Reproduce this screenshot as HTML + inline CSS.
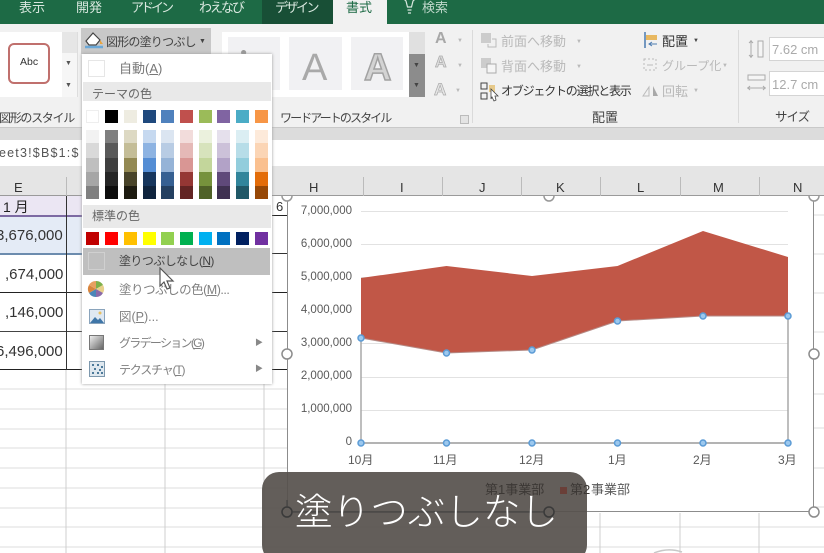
<!DOCTYPE html>
<html lang="ja"><head><meta charset="utf-8"><style>
html,body{margin:0;padding:0;width:824px;height:553px;overflow:hidden}
body{position:relative;background:#fff;font-family:"Liberation Sans","Noto Sans CJK JP",sans-serif;color:#444}
#w{position:absolute;left:0;top:0;width:824px;height:553px;overflow:hidden}
.a,.t,.s{position:absolute}
.t{white-space:nowrap;line-height:1;font-size:12px}
.g{color:#b9b9b9}
.col{width:13px;top:130px;height:69px;position:absolute}
.s{width:13px;height:13px}
u{text-decoration:underline}
.m{font-size:12px;letter-spacing:-.6px;color:#808080}
.h{font-size:13px;color:#333}
.y{font-size:11.500px;color:#595959;width:56px;text-align:right;left:296px}
.x{font-size:12px;color:#595959;top:454px}
.c{font-size:15px;color:#333}
.tab{font-size:13px;top:1px;color:#d9e8df}
</style></head><body><div id="w">

<!-- top tab bar -->
<div class="a" style="left:0;top:0;width:824px;height:24px;background:#1d6a45"></div>
<div class="a" style="left:262px;top:0;width:71px;height:24px;background:#184f36"></div>
<div class="a" style="left:333px;top:0;width:54px;height:25px;background:#f1f1f1"></div>
<div class="t tab" style="left:19px">表示</div>
<div class="t tab" style="left:76px">開発</div>
<div class="t tab" style="left:131px;letter-spacing:-3px">アドイン</div>
<div class="t tab" style="left:199px;letter-spacing:-2px">わえなび</div>
<div class="t tab" style="left:275px;letter-spacing:-2.500px">デザイン</div>
<div class="t tab" style="left:346px;color:#1d6a45">書式</div>
<svg class="a" style="left:400px;top:0" width="20" height="18"><path d="M6 1a6 6 0 1 1 7 0l-1.500 6h-4zM7.500 10h4M8 13h3" fill="none" stroke="#d9e8df" stroke-width="1.200"/></svg>
<div class="t tab" style="left:422px;color:#c0d8cb">検索</div>

<!-- ribbon -->
<div class="a" style="left:0;top:24px;width:824px;height:103px;background:#f1f1f1"></div>
<div class="a" style="left:0;top:127px;width:824px;height:13px;background:#dcdcdc;border-top:1px solid #c9c9c9;box-sizing:border-box"></div>
<div class="a" style="left:0;top:32px;width:62px;height:65px;background:#fff"></div>
<div class="a" style="left:8px;top:43px;width:42px;height:41px;box-sizing:border-box;border:2px solid #c0706d;border-radius:6px;background:#fff"></div>
<div class="t" style="left:20px;top:57px;font-size:10.500px;color:#333">Abc</div>
<div class="a" style="left:62px;top:32px;width:15px;height:65px;background:#f6f6f6;border-right:1px solid #ddd"></div>
<div class="a" style="left:62px;top:32px;width:15px;height:21px;background:#e6e6e6"></div>
<div class="t" style="left:65px;top:60px;font-size:7px;color:#555">▼</div>
<div class="t" style="left:65px;top:82px;font-size:7px;color:#555">▼</div>
<div class="a" style="left:81px;top:28px;width:130px;height:26px;background:#c8c8c8"></div>
<svg class="a" style="left:84px;top:30px" width="22" height="20"><path d="M2 11l7-8 7 7-4 5H5z" fill="#fff" stroke="#444" stroke-width="1.200"/><path d="M1 17h18" stroke="#6aa8d8" stroke-width="2.500"/><path d="M16 10l3 4h-3z" fill="#e8a33c"/></svg>
<div class="t" style="left:106px;top:36px;letter-spacing:-.8px;color:#444">図形の塗りつぶし</div>
<div class="t" style="left:199px;top:38px;font-size:7px;color:#444">▼</div>
<div class="t" style="left:-1px;top:112px;letter-spacing:-1.300px;color:#444">図形のスタイル</div>

<!-- WordArt gallery -->
<div class="a" style="left:222px;top:32px;width:187px;height:65px;background:#fff"></div>
<div class="a" style="left:228px;top:37px;width:52px;height:53px;background:#f1f1f3"></div>
<div class="a" style="left:289px;top:37px;width:53px;height:53px;background:#f1f1f3"></div>
<div class="a" style="left:351px;top:37px;width:52px;height:53px;background:#f1f1f3"></div>
<div class="t" style="left:302px;top:49px;font-size:38px;color:#a9a9a9">A</div>
<div class="t" style="left:364px;top:49px;font-size:38px;font-weight:700;color:#d3d3d3;-webkit-text-stroke:1.500px #a2a2a2">A</div>
<div class="t" style="left:240px;top:46px;font-size:12px;color:#999">●</div>
<div class="a" style="left:409px;top:32px;width:16px;height:22px;background:#e0e0e0"></div>
<div class="a" style="left:409px;top:54px;width:16px;height:43px;background:#8c8c8c"></div>
<div class="t" style="left:413px;top:62px;font-size:7px;color:#444">▼</div>
<div class="t" style="left:413px;top:82px;font-size:7px;color:#444">▼</div>
<div class="t" style="left:435px;top:31px;font-size:16px;font-weight:700;color:#a8a8a8">A</div>
<div class="t" style="left:435px;top:55px;font-size:16px;font-weight:700;color:#ddd;-webkit-text-stroke:.7px #aaa">A</div>
<div class="t" style="left:434px;top:81px;font-size:17px;font-weight:700;color:#e6e6e6;-webkit-text-stroke:.7px #aaa">A</div>
<div class="t g" style="left:457px;top:38px;font-size:6px">▼</div>
<div class="t g" style="left:457px;top:63px;font-size:6px">▼</div>
<div class="t g" style="left:455px;top:88px;font-size:6px">▼</div>
<div class="t" style="left:280px;top:112px;letter-spacing:-1.900px;color:#444">ワードアートのスタイル</div>
<div class="a" style="left:460px;top:115px;width:7px;height:7px;border:1px solid #bbb;background:#e4e4e4"></div>
<div class="a" style="left:472px;top:30px;width:1px;height:93px;background:#dadada"></div>
<div class="a" style="left:738px;top:30px;width:1px;height:93px;background:#dadada"></div>

<!-- arrange group -->
<svg class="a" style="left:480px;top:32px" width="18" height="16"><rect x="1" y="1" width="10" height="10" fill="#ccc"/><path d="M12 7h4v8H8v-3" fill="none" stroke="#bbb"/></svg>
<svg class="a" style="left:480px;top:57px" width="18" height="17"><rect x="1" y="1" width="10" height="10" fill="#ccc"/><rect x="7" y="7" width="9" height="9" fill="#f5f5f5" stroke="#aaa"/></svg>
<svg class="a" style="left:480px;top:82px" width="20" height="20"><rect x="1" y="1" width="6" height="6" fill="none" stroke="#444"/><rect x="1" y="11" width="6" height="6" fill="none" stroke="#444"/><rect x="9" y="3" width="6" height="7" fill="#e6c98a"/><path d="M11 7l7 7-3 0 1 4-2 1-2-4-1 2z" fill="#fff" stroke="#444" stroke-width=".8"/></svg>
<div class="t g" style="left:501px;top:35px;font-size:13px">前面へ移動</div>
<div class="t g" style="left:576px;top:39px;font-size:6px">▼</div>
<div class="t g" style="left:501px;top:60px;font-size:13px">背面へ移動</div>
<div class="t g" style="left:576px;top:64px;font-size:6px">▼</div>
<div class="t" style="left:501px;top:85px;letter-spacing:-1.200px;color:#333">オブジェクトの選択と表示</div>
<svg class="a" style="left:643px;top:31px" width="16" height="18"><path d="M2 1v16" stroke="#4a7ab0" stroke-width="1.500"/><rect x="3" y="4" width="11" height="5" fill="#e8b860"/><path d="M14 13H6m3-2l-3 2 3 2" stroke="#4a7ab0" fill="none"/></svg>
<div class="t" style="left:662px;top:35px;font-size:13px;color:#333">配置</div>
<div class="t" style="left:693px;top:38px;font-size:6px;color:#444">▼</div>
<svg class="a" style="left:641px;top:56px" width="18" height="17"><rect x="3" y="3" width="12" height="11" fill="none" stroke="#bbb" stroke-dasharray="2 2"/><path d="M6 9h6" stroke="#bbb"/></svg>
<div class="t g" style="left:662px;top:60px">グループ化</div>
<div class="t g" style="left:722px;top:63px;font-size:6px">▼</div>
<svg class="a" style="left:642px;top:84px" width="18" height="14"><path d="M1 12L7 3v9z" fill="none" stroke="#bbb"/><path d="M11 2l5 10h-5z" fill="#a8a8a8"/></svg>
<div class="t g" style="left:662px;top:85px;font-size:13px">回転</div>
<div class="t g" style="left:693px;top:88px;font-size:6px">▼</div>
<div class="t" style="left:592px;top:111px;font-size:13px;color:#444">配置</div>

<!-- size group -->
<svg class="a" style="left:746px;top:39px" width="20" height="20"><path d="M5 1v18M3 4l2-2 2 2M3 16l2 2 2-2" stroke="#aaa" fill="none"/><rect x="12" y="2" width="5" height="16" fill="#f5f5f5" stroke="#aaa"/></svg>
<div class="a" style="left:769px;top:37px;width:60px;height:24px;background:#fff;border:1px solid #d4d4d4;box-sizing:border-box"></div>
<div class="t" style="left:772px;top:43px;font-size:13px;color:#aaa">7.62 cm</div>
<svg class="a" style="left:746px;top:73px" width="22" height="20"><rect x="2" y="2" width="17" height="5" fill="#f5f5f5" stroke="#aaa"/><path d="M1 15h19M4 13l-2 2 2 2M17 13l2 2-2 2" stroke="#aaa" fill="none"/></svg>
<div class="a" style="left:769px;top:71px;width:60px;height:25px;background:#fff;border:1px solid #d4d4d4;box-sizing:border-box"></div>
<div class="t" style="left:772px;top:78px;font-size:13px;color:#aaa">12.7 cm</div>
<div class="t" style="left:775px;top:111px;letter-spacing:-1px;font-size:12.500px;color:#444">サイズ</div>

<!-- formula bar -->
<div class="a" style="left:0;top:140px;width:824px;height:26px;background:#fff"></div>
<div class="t" style="left:-1px;top:147px;font-size:12.500px;letter-spacing:1.200px;color:#555">eet3!$B$1:$</div>

<!-- gridlines below table -->
<svg class="a" style="left:0;top:370px" width="824" height="183">
<g stroke="#dcdcdc" stroke-width="1"><path d="M0 19h287M0 39h287M0 59h287M0 78h287M0 98h287M0 118h287M0 138h287M0 157h287M0 177h287"/><path d="M66 0v183M165 0v183M264 0v183" stroke="#cfcfcf"/><path d="M287 157h537M287 177h537"/><path d="M600 143v40M680 143v40M759 143v40" stroke="#cfcfcf"/><path d="M814 24h10M814 58h10M814 98h10M814 137h10"/></g>
<path d="M654 183a40 40 0 0 1 28-1" fill="none" stroke="#c8c8c8" stroke-width="1.500"/>
</svg>
<svg class="a" style="left:814px;top:196px" width="10" height="180"><path d="M0 19h10M0 58h10M0 97h10M0 136h10" stroke="#dcdcdc"/></svg>

<!-- cells -->
<div class="a" style="left:0;top:196px;width:82px;height:19px;background:#ebe6f3"></div>
<div class="a" style="left:0;top:215px;width:82px;height:2px;background:#7d6aa3"></div>
<div class="a" style="left:0;top:217px;width:82px;height:37px;background:#e4ebf6"></div>
<div class="a" style="left:0;top:253px;width:82px;height:2px;background:#6c8cae"></div>
<div class="a" style="left:0;top:292px;width:82px;height:1px;background:#222"></div>
<div class="a" style="left:0;top:331px;width:82px;height:1px;background:#444"></div>
<div class="a" style="left:0;top:369px;width:82px;height:1px;background:#222"></div>
<div class="a" style="left:66px;top:196px;width:1px;height:174px;background:#333"></div>
<div class="t" style="left:3px;top:200px;font-size:14px;color:#222">1 月</div>
<div class="t c" style="left:-4px;top:228px">3,676,000</div>
<div class="t c" style="left:5px;top:267px">,674,000</div>
<div class="t c" style="left:5px;top:305px">,146,000</div>
<div class="t c" style="left:-4px;top:344px">6,496,000</div>
<div class="a" style="left:272px;top:215px;width:15px;height:1px;background:#222"></div>
<div class="a" style="left:272px;top:253px;width:15px;height:1px;background:#333"></div>
<div class="a" style="left:272px;top:292px;width:15px;height:1px;background:#222"></div>
<div class="a" style="left:272px;top:331px;width:15px;height:1px;background:#333"></div>
<div class="a" style="left:272px;top:369px;width:15px;height:1px;background:#222"></div>
<div class="t" style="left:276px;top:200px;font-size:13px;color:#333">6</div>

<!-- chart -->
<div class="a" style="left:287px;top:196px;width:527px;height:316px;background:#fff;border:1px solid #8c8c8c;box-sizing:border-box;border-top:0"></div>
<svg class="a" style="left:280px;top:186px" width="544" height="340">
<g stroke="#e2e2e2" stroke-width="1"><path d="M81 25.500h427M81 58.500h427M81 91.500h427M81 124.500h427M81 157.500h427M81 191.500h427M81 224.500h427"/></g>
<path d="M81 92L166.500 80 252 90 337.500 80 423 45 508 71V130L423 130 337.500 135 252 164 166.500 167 81 152Z" fill="#c15747"/>
<path d="M81 152V257M508 130V257" stroke="#a8a8a8" stroke-width="1.500"/>
<path d="M81 257H508" stroke="#9a9a9a" stroke-width="1.500"/>
<path d="M81 152L166.500 167 252 164 337.500 135 423 130 508 130" fill="none" stroke="#b58a85" stroke-width="1"/>
<g fill="#9cc8ee" stroke="#5b9bd5" stroke-width="1.500"><circle cx="81" cy="152" r="3"/><circle cx="166.500" cy="167" r="3"/><circle cx="252" cy="164" r="3"/><circle cx="337.500" cy="135" r="3"/><circle cx="423" cy="130" r="3"/><circle cx="508" cy="130" r="3"/><circle cx="81" cy="257" r="3"/><circle cx="166.500" cy="257" r="3"/><circle cx="252" cy="257" r="3"/><circle cx="337.500" cy="257" r="3"/><circle cx="423" cy="257" r="3"/><circle cx="508" cy="257" r="3"/></g>
<g fill="#fff" stroke="#8c8c8c" stroke-width="1.500"><circle cx="7" cy="168" r="5"/><circle cx="534" cy="168" r="5"/><circle cx="534" cy="326" r="5"/><circle cx="7" cy="326" r="5"/><circle cx="269" cy="326" r="5"/></g>
</svg>

<!-- column headers (above the chart so top handles are cut off) -->
<div class="a" style="left:0;top:166px;width:824px;height:30px;background:#e5e5e5;border-bottom:1px solid #9a9a9a;box-sizing:border-box"></div>
<svg class="a" style="left:280px;top:195px" width="544" height="10"><g fill="#fff" stroke="#999" stroke-width="1.500"><path d="M2 1a5 5 0 0 0 10 0"/><path d="M264 1a5 5 0 0 0 10 0"/><path d="M529 1a5 5 0 0 0 10 0"/></g></svg>
<div class="a" style="left:66px;top:177px;width:1px;height:19px;background:#bbb"></div>
<div class="a" style="left:363px;top:177px;width:1px;height:19px;background:#bbb"></div>
<div class="a" style="left:442px;top:177px;width:1px;height:19px;background:#bbb"></div>
<div class="a" style="left:521px;top:177px;width:1px;height:19px;background:#bbb"></div>
<div class="a" style="left:600px;top:177px;width:1px;height:19px;background:#bbb"></div>
<div class="a" style="left:680px;top:177px;width:1px;height:19px;background:#bbb"></div>
<div class="a" style="left:759px;top:177px;width:1px;height:19px;background:#bbb"></div>
<div class="t h" style="left:14px;top:181px">E</div>
<div class="t h" style="left:309px;top:181px">H</div>
<div class="t h" style="left:400px;top:181px">I</div>
<div class="t h" style="left:479px;top:181px">J</div>
<div class="t h" style="left:556px;top:181px">K</div>
<div class="t h" style="left:637px;top:181px">L</div>
<div class="t h" style="left:713px;top:181px">M</div>
<div class="t h" style="left:793px;top:181px">N</div>

<div class="t y" style="top:206px">7,000,000</div>
<div class="t y" style="top:239px">6,000,000</div>
<div class="t y" style="top:272px">5,000,000</div>
<div class="t y" style="top:305px">4,000,000</div>
<div class="t y" style="top:338px">3,000,000</div>
<div class="t y" style="top:371px">2,000,000</div>
<div class="t y" style="top:404px">1,000,000</div>
<div class="t y" style="top:437px">0</div>
<div class="t x" style="left:348px">10月</div>
<div class="t x" style="left:433px">11月</div>
<div class="t x" style="left:519px">12月</div>
<div class="t x" style="left:608px">1月</div>
<div class="t x" style="left:693px">2月</div>
<div class="t x" style="left:778px">3月</div>
<div class="t" style="left:591px;top:483px;font-size:13px;color:#595959">事業部</div>

<!-- dropdown menu -->
<div class="a" style="left:82px;top:54px;width:190px;height:330px;background:#fff;box-shadow:0 0 3px #999"></div>
<div class="a" style="left:88px;top:60px;width:17px;height:17px;border:1px solid #e6e6e6;box-sizing:border-box"></div>
<div class="t" style="left:119px;top:62px;font-size:13px;color:#777">自動(<u>A</u>)</div>
<div class="a" style="left:83px;top:82px;width:188px;height:19px;background:#e9e9e9"></div>
<div class="t" style="left:92px;top:88px;color:#666">テーマの色</div>
<div class="s" style="left:86px;top:110px;background:#fff;border:1px solid #eee;box-sizing:border-box"></div>
<div class="s" style="left:105px;top:110px;background:#000"></div>
<div class="s" style="left:124px;top:110px;background:#eeece1"></div>
<div class="s" style="left:143px;top:110px;background:#1f497d"></div>
<div class="s" style="left:161px;top:110px;background:#4f81bd"></div>
<div class="s" style="left:180px;top:110px;background:#c0504d"></div>
<div class="s" style="left:199px;top:110px;background:#9bbb59"></div>
<div class="s" style="left:217px;top:110px;background:#8064a2"></div>
<div class="s" style="left:236px;top:110px;background:#4bacc6"></div>
<div class="s" style="left:255px;top:110px;background:#f79646"></div>
<div class="col" style="left:86px;background:linear-gradient(#f2f2f2 0 13px,#d9d9d9 13px 28px,#bfbfbf 28px 42px,#a6a6a6 42px 56px,#808080 56px)"></div>
<div class="col" style="left:105px;background:linear-gradient(#7f7f7f 0 13px,#595959 13px 28px,#3f3f3f 28px 42px,#262626 42px 56px,#0d0d0d 56px)"></div>
<div class="col" style="left:124px;background:linear-gradient(#ddd9c3 0 13px,#c4bd97 13px 28px,#938953 28px 42px,#494429 42px 56px,#1d1b10 56px)"></div>
<div class="col" style="left:143px;background:linear-gradient(#c6d9f0 0 13px,#8db3e2 13px 28px,#548dd4 28px 42px,#17365d 42px 56px,#0f243e 56px)"></div>
<div class="col" style="left:161px;background:linear-gradient(#dbe5f1 0 13px,#b8cce4 13px 28px,#95b3d7 28px 42px,#366092 42px 56px,#244061 56px)"></div>
<div class="col" style="left:180px;background:linear-gradient(#f2dcdb 0 13px,#e5b9b7 13px 28px,#d99694 28px 42px,#953734 42px 56px,#632423 56px)"></div>
<div class="col" style="left:199px;background:linear-gradient(#ebf1dd 0 13px,#d7e3bc 13px 28px,#c3d69b 28px 42px,#76923c 42px 56px,#4f6128 56px)"></div>
<div class="col" style="left:217px;background:linear-gradient(#e5e0ec 0 13px,#ccc1d9 13px 28px,#b2a2c7 28px 42px,#5f497a 42px 56px,#3f3151 56px)"></div>
<div class="col" style="left:236px;background:linear-gradient(#dbeef3 0 13px,#b7dde8 13px 28px,#92cddc 28px 42px,#31859b 42px 56px,#205867 56px)"></div>
<div class="col" style="left:255px;background:linear-gradient(#fdeada 0 13px,#fbd5b5 13px 28px,#fac08f 28px 42px,#e36c09 42px 56px,#974806 56px)"></div>
<div class="a" style="left:83px;top:205px;width:188px;height:23px;background:#e9e9e9"></div>
<div class="t" style="left:92px;top:210px;color:#666">標準の色</div>
<div class="s" style="left:86px;top:232px;background:#c00000"></div>
<div class="s" style="left:105px;top:232px;background:#ff0000"></div>
<div class="s" style="left:124px;top:232px;background:#ffc000"></div>
<div class="s" style="left:143px;top:232px;background:#ffff00"></div>
<div class="s" style="left:161px;top:232px;background:#92d050"></div>
<div class="s" style="left:180px;top:232px;background:#00b050"></div>
<div class="s" style="left:199px;top:232px;background:#00b0f0"></div>
<div class="s" style="left:217px;top:232px;background:#0070c0"></div>
<div class="s" style="left:236px;top:232px;background:#002060"></div>
<div class="s" style="left:255px;top:232px;background:#7030a0"></div>
<div class="a" style="left:83px;top:248px;width:187px;height:27px;background:#bfbfbf"></div>
<div class="a" style="left:88px;top:252px;width:17px;height:18px;border:1px solid #d0d0d0;box-sizing:border-box"></div>
<div class="t m" style="left:119px;top:255px;color:#444">塗りつぶしなし(<u>N</u>)</div>
<svg class="a" style="left:87px;top:280px" width="18" height="18"><path d="M9 9V1a8 8 0 0 1 7 4z" fill="#7fb04a"/><path d="M9 9l7-4a8 8 0 0 1 0 8z" fill="#e8d08a"/><path d="M9 9l7 4a8 8 0 0 1-7 4z" fill="#8a6aa8"/><path d="M9 9v8a8 8 0 0 1-7-4z" fill="#4a86b8"/><path d="M9 9l-7 4a8 8 0 0 1 0-8z" fill="#d8843c"/><path d="M9 9L2 5a8 8 0 0 1 7-4z" fill="#e8a060"/></svg>
<div class="t m" style="left:119px;top:284px;font-size:12.500px;letter-spacing:-.5px">塗りつぶしの色(<u>M</u>)...</div>
<svg class="a" style="left:89px;top:309px" width="16" height="15"><rect x=".5" y=".5" width="15" height="14" fill="#dfe8f2" stroke="#8aa4bc"/><path d="M1 14l5-6 3 3 2-2 4 5z" fill="#3f76a8"/><circle cx="11" cy="4" r="1.500" fill="#e8c060"/></svg>
<div class="t m" style="left:119px;top:311px;font-size:12.500px;letter-spacing:0">図(<u>P</u>)...</div>
<div class="a" style="left:89px;top:335px;width:15px;height:15px;background:linear-gradient(135deg,#eee,#666);border:1px solid #777;box-sizing:border-box"></div>
<div class="t m" style="left:119px;top:337px;letter-spacing:-1.700px">グラデーション(<u>G</u>)</div>
<div class="t" style="left:255px;top:339px;font-size:8px;color:#888">▶</div>
<svg class="a" style="left:89px;top:361px" width="16" height="16"><rect x=".5" y=".5" width="15" height="15" fill="#dfe8ef" stroke="#7d98ad"/><path d="M3 3h2v2H3zM8 3h2v2H8zM12 5h2v2h-2zM5 7h2v2H5zM10 8h2v2h-2zM3 11h2v2H3zM8 11h2v2H8zM12 11h2v2h-2z" fill="#4d7a9a"/></svg>
<div class="t m" style="left:119px;top:364px;letter-spacing:-1.200px">テクスチャ(<u>T</u>)</div>
<div class="t" style="left:255px;top:365px;font-size:8px;color:#888">▶</div>

<!-- cursor -->
<svg class="a" style="left:158px;top:267px" width="18" height="26"><path d="M2 1v18l4-4 3 7 3-1-3-7h6z" fill="#fff" stroke="#555" stroke-width="1.200"/></svg>

<!-- caption overlay -->
<div class="a" style="left:262px;top:472px;width:325px;height:90px;background:rgba(86,80,76,.92);border-radius:17px"></div>
<svg class="a" style="left:280px;top:500px" width="290" height="30"><circle cx="7" cy="12" r="5" fill="none" stroke="#3a3a3a" stroke-width="1.500"/><circle cx="269" cy="12" r="5" fill="none" stroke="#3a3a3a" stroke-width="1.500"/><path d="M7 0v7M12 12h252" stroke="#3f3f3f" stroke-width="1"/></svg>
<div class="t" style="left:485px;top:483px;font-size:13px;color:#3c3835">第1事業部</div>
<div class="a" style="left:560px;top:487px;width:7px;height:7px;background:#6a3f38"></div>
<div class="t" style="left:570px;top:483px;font-size:13px;color:#3c3835">第2</div>
<div class="t" style="left:295px;top:494px;font-size:37.500px;font-weight:300;color:#fff">塗りつぶしなし</div>
</div></body></html>
